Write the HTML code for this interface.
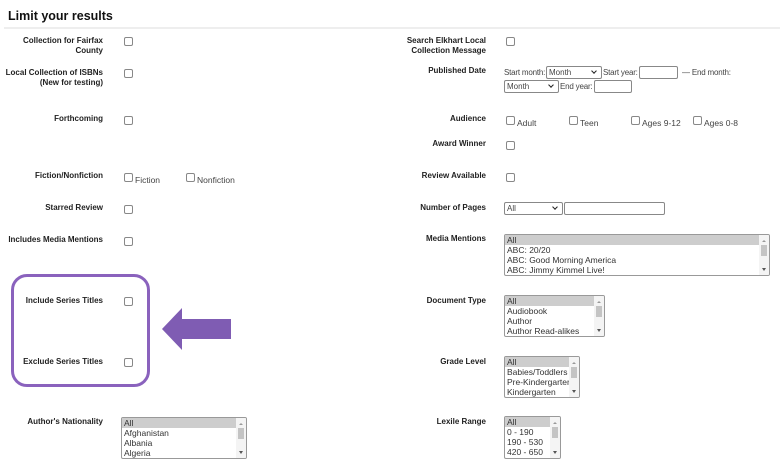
<!DOCTYPE html>
<html><head><meta charset="utf-8"><style>
*{margin:0;padding:0;box-sizing:border-box}
body{width:780px;height:463px;background:#fff;position:relative;overflow:hidden;font-family:"Liberation Sans",Arial,sans-serif;color:#222}
.a{position:absolute}
.t{position:absolute;font-size:12.5px;font-weight:bold;left:8px;top:9px;color:#111}
.hr{position:absolute;left:4px;right:0;top:27px;height:2px;background:#eee}
.l{position:absolute;font-size:8px;font-weight:bold;text-align:right;line-height:10px;color:#222}
.L{right:677px}
.R{right:294px}
.cb{position:absolute;width:9px;height:9px;border:1px solid #888;border-radius:2px;background:#fff}
.s{position:absolute;font-size:8.5px;color:#444;line-height:10px}
.p{font-size:8px;letter-spacing:-0.2px}
.sel{position:absolute;border:1px solid #888;border-radius:2px;font-size:8px;color:#444;padding-left:2px;line-height:11px;background:#fff}
.sel:after{content:"";position:absolute;right:5px;top:2px;width:3px;height:3px;border-right:1.3px solid #222;border-bottom:1.3px solid #222;transform:rotate(45deg)}
.inp{position:absolute;border:1px solid #888;border-radius:2px;background:#fff}
.lb{position:absolute;border:1px solid #999;border-radius:2px;background:#fff;font-size:8.5px;color:#333;line-height:10px;overflow:hidden}
.lb div{padding-left:2px;white-space:nowrap}
.lb .h{background:#cdcdcd}
.sb{position:absolute;right:0;top:0;bottom:0;width:10px;background:#f4f4f4}
.sb i{position:absolute;left:2px;right:2px;top:10px;height:11px;background:#c4c4c4}
.sb:before{content:"";position:absolute;left:3px;top:3px;border:2px solid transparent;border-bottom:2px solid #999}
.sb:after{content:"";position:absolute;left:3px;bottom:2px;border:2px solid transparent;border-top:3px solid #555}
</style></head><body>
<div class="t">Limit your results</div>
<div class="hr"></div>

<div class="l L" style="top:36px">Collection for Fairfax<br>County</div>
<div class="cb" style="left:124px;top:37px"></div>
<div class="l L" style="top:68px">Local Collection of ISBNs<br>(New for testing)</div>
<div class="cb" style="left:124px;top:69px"></div>
<div class="l L" style="top:114px">Forthcoming</div>
<div class="cb" style="left:124px;top:116px"></div>
<div class="l L" style="top:171px">Fiction/Nonfiction</div>
<div class="cb" style="left:124px;top:173px"></div><div class="s" style="left:135px;top:175px">Fiction</div>
<div class="cb" style="left:186px;top:173px"></div><div class="s" style="left:197px;top:175px">Nonfiction</div>
<div class="l L" style="top:203px">Starred Review</div>
<div class="cb" style="left:124px;top:205px"></div>
<div class="l L" style="top:235px">Includes Media Mentions</div>
<div class="cb" style="left:124px;top:237px"></div>

<div class="a" style="left:11px;top:274px;width:139px;height:113px;border:3px solid #8a62bd;border-radius:16px"></div>
<div class="l L" style="top:296px">Include Series Titles</div>
<div class="cb" style="left:124px;top:297px"></div>
<div class="l L" style="top:357px">Exclude Series Titles</div>
<div class="cb" style="left:124px;top:358px"></div>
<svg class="a" style="left:160px;top:306px" width="72" height="46"><polygon points="2,23 22,2 22,13 71,13 71,33 22,33 22,44" fill="#7f5cb3"/></svg>

<div class="l L" style="top:417px">Author's Nationality</div>
<div class="lb" style="left:121px;top:417px;width:126px;height:42px"><div class="h" style="margin-right:10px">All</div><div>Afghanistan</div><div>Albania</div><div>Algeria</div><div class="sb"><i></i></div></div>

<div class="l R" style="top:36px">Search Elkhart Local<br>Collection Message</div>
<div class="cb" style="left:506px;top:37px"></div>
<div class="l R" style="top:66px">Published Date</div>
<div class="s p" style="left:504px;top:68px">Start month:</div>
<div class="sel" style="left:546px;top:66px;width:56px;height:13px">Month</div>
<div class="s p" style="left:603px;top:68px">Start year:</div>
<div class="inp" style="left:639px;top:66px;width:39px;height:13px"></div>
<div class="s p" style="left:682px;top:68px">— End month:</div>
<div class="sel" style="left:504px;top:80px;width:55px;height:13px">Month</div>
<div class="s p" style="left:560px;top:82px">End year:</div>
<div class="inp" style="left:594px;top:80px;width:38px;height:13px"></div>

<div class="l R" style="top:114px">Audience</div>
<div class="cb" style="left:506px;top:116px"></div><div class="s" style="left:517px;top:118px">Adult</div>
<div class="cb" style="left:569px;top:116px"></div><div class="s" style="left:580px;top:118px">Teen</div>
<div class="cb" style="left:631px;top:116px"></div><div class="s" style="left:642px;top:118px">Ages 9-12</div>
<div class="cb" style="left:693px;top:116px"></div><div class="s" style="left:704px;top:118px">Ages 0-8</div>
<div class="l R" style="top:139px">Award Winner</div>
<div class="cb" style="left:506px;top:141px"></div>
<div class="l R" style="top:171px">Review Available</div>
<div class="cb" style="left:506px;top:173px"></div>
<div class="l R" style="top:203px">Number of Pages</div>
<div class="sel" style="left:504px;top:202px;width:59px;height:13px">All</div>
<div class="inp" style="left:564px;top:202px;width:101px;height:13px"></div>

<div class="l R" style="top:234px">Media Mentions</div>
<div class="lb" style="left:504px;top:234px;width:266px;height:42px"><div class="h" style="margin-right:10px">All</div><div>ABC: 20/20</div><div>ABC: Good Morning America</div><div>ABC: Jimmy Kimmel Live!</div><div class="sb"><i></i></div></div>
<div class="l R" style="top:296px">Document Type</div>
<div class="lb" style="left:504px;top:295px;width:101px;height:42px"><div class="h" style="margin-right:10px">All</div><div>Audiobook</div><div>Author</div><div>Author Read-alikes</div><div class="sb"><i></i></div></div>
<div class="l R" style="top:357px">Grade Level</div>
<div class="lb" style="left:504px;top:356px;width:76px;height:42px"><div class="h" style="margin-right:10px">All</div><div>Babies/Toddlers</div><div>Pre-Kindergarten</div><div>Kindergarten</div><div class="sb"><i></i></div></div>
<div class="l R" style="top:417px">Lexile Range</div>
<div class="lb" style="left:504px;top:416px;width:57px;height:43px"><div class="h" style="margin-right:10px">All</div><div>0 - 190</div><div>190 - 530</div><div>420 - 650</div><div class="sb"><i></i></div></div>
</body></html>
